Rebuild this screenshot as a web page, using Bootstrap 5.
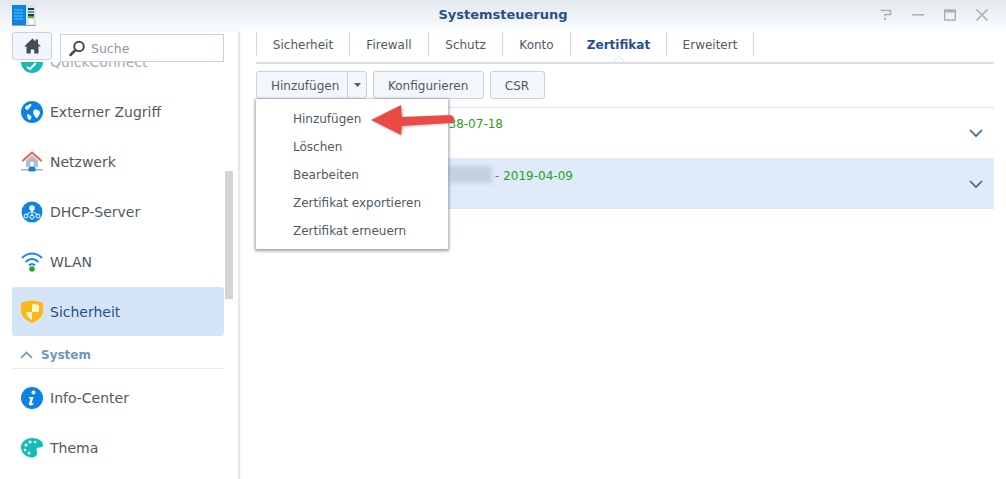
<!DOCTYPE html>
<html lang="de">
<head>
<meta charset="UTF-8">
<title>Systemsteuerung</title>
<link href="https://cdn.jsdelivr.net/npm/bootstrap@5.3.3/dist/css/bootstrap.min.css" rel="stylesheet">
<style>
html, body { height: 100%; overflow: hidden; }
body { font-family: "DejaVu Sans", Verdana, sans-serif; font-size: 12px; color: #505a64; background: #fff; width: 1006px; height: 479px; position: relative; }
.title-bar { height: 32px; background: linear-gradient(#e3e8ef, #fcfdfd); }
.title-logo { margin-left: 12px; margin-top: 5px; }
.title-text { left: 0; right: 0; top: 6px; font-size: 13px; font-weight: 700; color: #27508c; line-height: 18px; }
.win-btns { gap: 20px; padding-right: 18px; padding-top: 9px; }
.side-col { width: 240px; height: 447px; border-right: 2px solid #e6e8ea; box-shadow: 1px 0 2px #f0f1f3; position: relative; }
.side-tools { height: 30px; padding-left: 12px; gap: 8px; position: relative; z-index: 2; background: #fff; }
.home-btn { width: 40px; height: 28px; border: 1px solid #c6d3e4; border-radius: 3px; background: #f2f6fb; }
.search-box { width: 164px; height: 28px; border: 1px solid #c6d3e4; margin-top: 2px; padding-left: 8px; gap: 5px; color: #8e98a4; font-size: 12.500px; }
.search-box span { padding-top: 2px; }
.side-list { width: 212px; margin-left: 12px; height: 417px; overflow: hidden; }
.side-inner { margin-top: -25px; }
.side-row { height: 50px; padding-left: 9px; gap: 7px; font-size: 14px; color: #505a64; }
.side-row.is-on { background: #d5e5f7; color: #27508c; border-radius: 3px; height: 49px; margin-bottom: 1px; padding-left: 8px; padding-top: 1px; gap: 6px; }
.quick-label { color: #a4abb3; }
.side-head { height: 32px; border-bottom: 1px solid #e6ecf2; padding-left: 8px; padding-top: 4px; gap: 8px; font-weight: 700; font-size: 12px; color: #6f97b8; margin-bottom: 4px; }
.side-thumb { position: absolute; left: 225px; top: 139px; width: 8px; height: 128px; background: #d2d4d6; }
.main-col { padding-left: 16px; width: 754px; }
.tab-bar { height: 32px; border-bottom: 2px solid #dcdfe2; }
.tab-item { height: 24px; border-right: 1px solid #ccd9e6; color: #505a64; line-height: 26px; position: relative; text-align: center; }
.tab-item:nth-child(1) { width: 94px; border-left: 1px solid #ccd9e6; }
.tab-item:nth-child(2) { width: 79px; }
.tab-item:nth-child(3) { width: 74px; }
.tab-item:nth-child(4) { width: 68px; }
.tab-item:nth-child(5) { width: 96px; }
.tab-item:nth-child(6) { width: 87px; }
.tab-item.is-on { color: #27508c; font-weight: 700; }
.tab-notch { position: absolute; left: 50%; margin-left: -6px; top: 24px; width: 12px; height: 7px; display: block; }
.tool-bar { padding-top: 7px; gap: 6px; height: 43px; }
.tool-btn { height: 28px; border: 1px solid #c6d3e4; border-radius: 3px; background: #f3f6fa; color: #505a64; font-size: 12px; padding: 1px 14.500px 0 14px; line-height: 26px; }
.split-left { width: 92px; border-radius: 3px 0 0 3px; padding: 1px 0 0 14px; text-align: left; }
.split-right { width: 20px; margin-left: -1px; border-radius: 0 3px 3px 0; padding: 0; display: flex; align-items: center; justify-content: center; }
.cert-list { border-top: 1px solid #dde3ea; }
.cert-row { height: 50px; padding-right: 11px; }
.cert-row.is-sel { height: 51px; background: #dfebfa; }
.cert-date { color: #2c9f1a; padding-top: 6px; line-height: 20px; }
.is-sel .cert-date { padding-top: 8px; }
.cert-blur { width: 43px; height: 17px; background: #c3d0de; filter: blur(2px); margin-left: 193px; margin-right: 3px; margin-top: 8px; }
.cert-chev { margin-left: auto; margin-top: 21px; }
.is-sel .cert-chev { margin-top: 22px; }
.pop-menu { position: absolute; left: 256px; top: 99px; width: 192px; height: 150px; background: #fff; box-shadow: 0 1px 3px 1px rgba(70,85,100,.55); padding-top: 6px; z-index: 5; }
.pop-item { height: 28px; line-height: 28px; padding-left: 37px; color: #505a64; }
.pop-arrow { position: absolute; left: 370px; top: 104px; z-index: 6; filter: drop-shadow(1px 1px 1px rgba(90,90,90,.35)); }
</style>
</head>
<body>

<div class="title-bar d-flex justify-content-between position-relative">
  <svg class="title-logo" width="24" height="21" viewBox="0 0 24 21">
    <rect x="0" y="0" width="14" height="20" fill="#0a87e0"/>
    <path d="M2 5h9M2 8h9M2 11h9M2 14h9" stroke="#5cc0f5" stroke-width="1"/>
    <rect x="14" y="0" width="10" height="20" fill="#dfe3e6"/>
    <rect x="16" y="3" width="6" height="2" fill="#333"/>
    <rect x="16" y="6" width="6" height="2" fill="#2aa7e0"/>
    <rect x="16" y="9" width="6" height="2" fill="#333"/>
    <rect x="16" y="11" width="6" height="2" fill="#4fb32c"/>
    <circle cx="19" cy="17" r="2.500" fill="#fff"/>
    <rect x="0" y="20" width="24" height="1" fill="#9aa3ab"/>
  </svg>
  <div class="title-text position-absolute text-center">Systemsteuerung</div>
  <div class="win-btns d-flex">
    <svg width="12" height="12" viewBox="0 0 12 12"><path d="M.5 1.500h10v4H5v2" fill="none" stroke="#b0b4b8" stroke-width="1.600"/><rect x="4" y="9" width="2" height="2" fill="#b0b4b8"/></svg>
    <svg width="12" height="12" viewBox="0 0 12 12"><rect x="0" y="5" width="12" height="1.600" fill="#aeb2b6"/></svg>
    <svg width="12" height="12" viewBox="0 0 12 12"><path d="M.7 1h10.600v10H.7z" fill="none" stroke="#aeb2b6" stroke-width="1.400"/><rect x="0" y="1" width="12" height="2.500" fill="#aeb2b6"/></svg>
    <svg width="12" height="12" viewBox="0 0 12 12"><path d="M.5 .5l11 11M11.500 .5l-11 11" stroke="#b0b4b8" stroke-width="1.600"/></svg>
  </div>
</div>

<div class="d-flex">
  <div class="side-col flex-shrink-0">
    <div class="side-tools d-flex">
      <div class="home-btn d-flex align-items-center justify-content-center">
        <svg width="17" height="16" viewBox="0 0 17 16"><path d="M8.500 .5L0 8.500h2.500V15.500h4.300v-4h3.400v4h4.300V8.500H17l-3-2.800V1.500h-2.500v1.900z" fill="#454c54"/></svg>
      </div>
      <div class="search-box d-flex align-items-center">
        <svg width="17" height="17" viewBox="0 0 17 17"><circle cx="10" cy="6.500" r="4.800" fill="none" stroke="#454c54" stroke-width="2"/><path d="M6.500 10L1.500 15" stroke="#454c54" stroke-width="2.500" stroke-linecap="round"/></svg>
        <span>Suche</span>
      </div>
    </div>
    <div class="side-list">
      <div class="side-inner">
        <div class="side-row d-flex align-items-center">
          <svg width="22" height="22" viewBox="0 0 22 22"><circle cx="11" cy="11" r="11" fill="#1cb8b4"/><path d="M6 16l3 2 6-6" fill="none" stroke="#fff" stroke-width="2"/></svg>
          <span class="quick-label">QuickConnect</span>
        </div>
        <div class="side-row d-flex align-items-center">
          <svg width="22" height="22" viewBox="0 0 22 22"><circle cx="11" cy="11" r="11" fill="#0a82e6"/><path d="M4 6c2-1 4-3 6-3 1 1 0 2-1 3s-2 3-3 3-2-2-2-3zM13 9c2-1 5 0 6 2 0 3-2 5-3 6-2 0-2-2-3-3s-1-4 0-5zM6 13c2 0 3 1 4 2s0 3-1 4c-2 0-3-3-3-6z" fill="#fff"/></svg>
          <span>Externer Zugriff</span>
        </div>
        <div class="side-row d-flex align-items-center">
          <svg width="22" height="22" viewBox="0 0 22 22"><path d="M5 9.500L11 4l6 5.500V16H5z" fill="#b4bcc6"/><rect x="9.500" y="11" width="3" height="4" fill="#fff"/><path d="M1.500 10L11 1.500 20.500 10" fill="none" stroke="#f05a55" stroke-width="2"/><rect x="0" y="18" width="22" height="1.500" fill="#a8b0ba"/><rect x="7.500" y="16" width="7" height="4.500" rx="1" fill="#0a82e6"/></svg>
          <span>Netzwerk</span>
        </div>
        <div class="side-row d-flex align-items-center">
          <svg width="22" height="22" viewBox="0 0 22 22"><circle cx="11" cy="11" r="10.500" fill="#0a82e6"/><circle cx="11" cy="7" r="2.800" fill="#fff"/><path d="M11 9v6M11 10L5 14M11 10l6 4" stroke="#fff" stroke-width="1"/><g fill="none" stroke="#fff"><circle cx="5" cy="15" r="2"/><circle cx="11" cy="16" r="2"/><circle cx="17" cy="15" r="2"/></g></svg>
          <span>DHCP-Server</span>
        </div>
        <div class="side-row d-flex align-items-center">
          <svg width="22" height="20" viewBox="0 0 22 20"><path d="M1 6c6-6 14-6 20 0M4.500 10c4-4 9-4 13 0M8 13.500c2-2 4-2 6 0" fill="none" stroke="#1a8be8" stroke-width="2"/><circle cx="11" cy="17" r="2.800" fill="#24a81c"/></svg>
          <span>WLAN</span>
        </div>
        <div class="side-row is-on d-flex align-items-center">
          <svg width="24" height="24" viewBox="0 0 24 24"><path d="M1 3c7-3 15-3 22 0v10c-2 5-6 8-11 10C7 21 3 18 1 13z" fill="#fdb913"/><path d="M12 4c3 0 5 .5 7 1v7h-7zM12 12v8c-3-1.500-5-4-6-8z" fill="#fff3d0"/></svg>
          <span>Sicherheit</span>
        </div>
        <div class="side-head d-flex align-items-center">
          <svg width="13" height="8" viewBox="0 0 13 8"><path d="M1 7l5.500-5.500L12 7" fill="none" stroke="#6f97b8" stroke-width="1.600"/></svg>
          <span>System</span>
        </div>
        <div class="side-row d-flex align-items-center">
          <svg width="22" height="22" viewBox="0 0 22 22"><circle cx="11" cy="11" r="11" fill="#0a82e6"/><circle cx="12.500" cy="5.500" r="2" fill="#fff"/><path d="M8 10h4.500l-2 6.500 2-.5-.5 1.800C10 19 7.500 18.500 8 17l1.500-5.500H8z" fill="#fff"/></svg>
          <span>Info-Center</span>
        </div>
        <div class="side-row d-flex align-items-center">
          <svg width="22" height="20" viewBox="0 0 22 20"><path d="M11 0c6 0 11 3 11 7 0 3-4 2-6 3-2 1 2 5-1 8-2 2-8 2-11-1C1 15 0 12 0 9 0 4 5 0 11 0z" fill="#12bdb9"/><g fill="#fff"><circle cx="5" cy="7" r="1.500"/><circle cx="9" cy="4" r="1.500"/><circle cx="14" cy="4" r="1.300"/><circle cx="4" cy="12" r="1.300"/><circle cx="8" cy="15" r="1.500"/></g></svg>
          <span>Thema</span>
        </div>
      </div>
    </div>
    <div class="side-thumb"></div>
  </div>

  <div class="main-col flex-shrink-0">
    <div class="tab-bar d-flex">
      <div class="tab-item">Sicherheit</div>
      <div class="tab-item">Firewall</div>
      <div class="tab-item">Schutz</div>
      <div class="tab-item">Konto</div>
      <div class="tab-item is-on">Zertifikat
        <svg class="tab-notch" viewBox="0 0 12 7"><path d="M0 6.500l6-6 6 6z" fill="#fff" stroke="#dcdfe2"/></svg>
      </div>
      <div class="tab-item">Erweitert</div>
    </div>
    <div class="tool-bar d-flex">
      <div class="d-flex">
        <button class="tool-btn split-left">Hinzufügen</button>
        <button class="tool-btn split-right"><svg width="7" height="4" viewBox="0 0 7 4"><path d="M0 0h7L3.500 4z" fill="#505a64"/></svg></button>
      </div>
      <button class="tool-btn">Konfigurieren</button>
      <button class="tool-btn">CSR</button>
    </div>
    <div class="cert-list">
      <div class="cert-row d-flex">
        <div class="cert-date text-end" style="width: 247px">2038-07-18</div>
        <svg class="cert-chev" width="14" height="9" viewBox="0 0 14 9"><path d="M1 1l6 6 6-6" fill="none" stroke="#34608f" stroke-width="1.600"/></svg>
      </div>
      <div class="cert-row is-sel d-flex">
        <div class="cert-blur"></div>
        <div class="cert-date"><span class="text-secondary">-</span> 2019-04-09</div>
        <svg class="cert-chev" width="14" height="9" viewBox="0 0 14 9"><path d="M1 1l6 6 6-6" fill="none" stroke="#34608f" stroke-width="1.600"/></svg>
      </div>
    </div>
  </div>
</div>

<div class="pop-menu">
  <div class="pop-item">Hinzufügen</div>
  <div class="pop-item">Löschen</div>
  <div class="pop-item">Bearbeiten</div>
  <div class="pop-item">Zertifikat exportieren</div>
  <div class="pop-item">Zertifikat erneuern</div>
</div>
<svg class="pop-arrow" width="86" height="33" viewBox="0 0 86 33">
  <path d="M1 16L31 1l1 12 48-2q4 1 4 4t-4 4l-48 3-1 9z" fill="#ea4a44"/>
</svg>

</body>
</html>
